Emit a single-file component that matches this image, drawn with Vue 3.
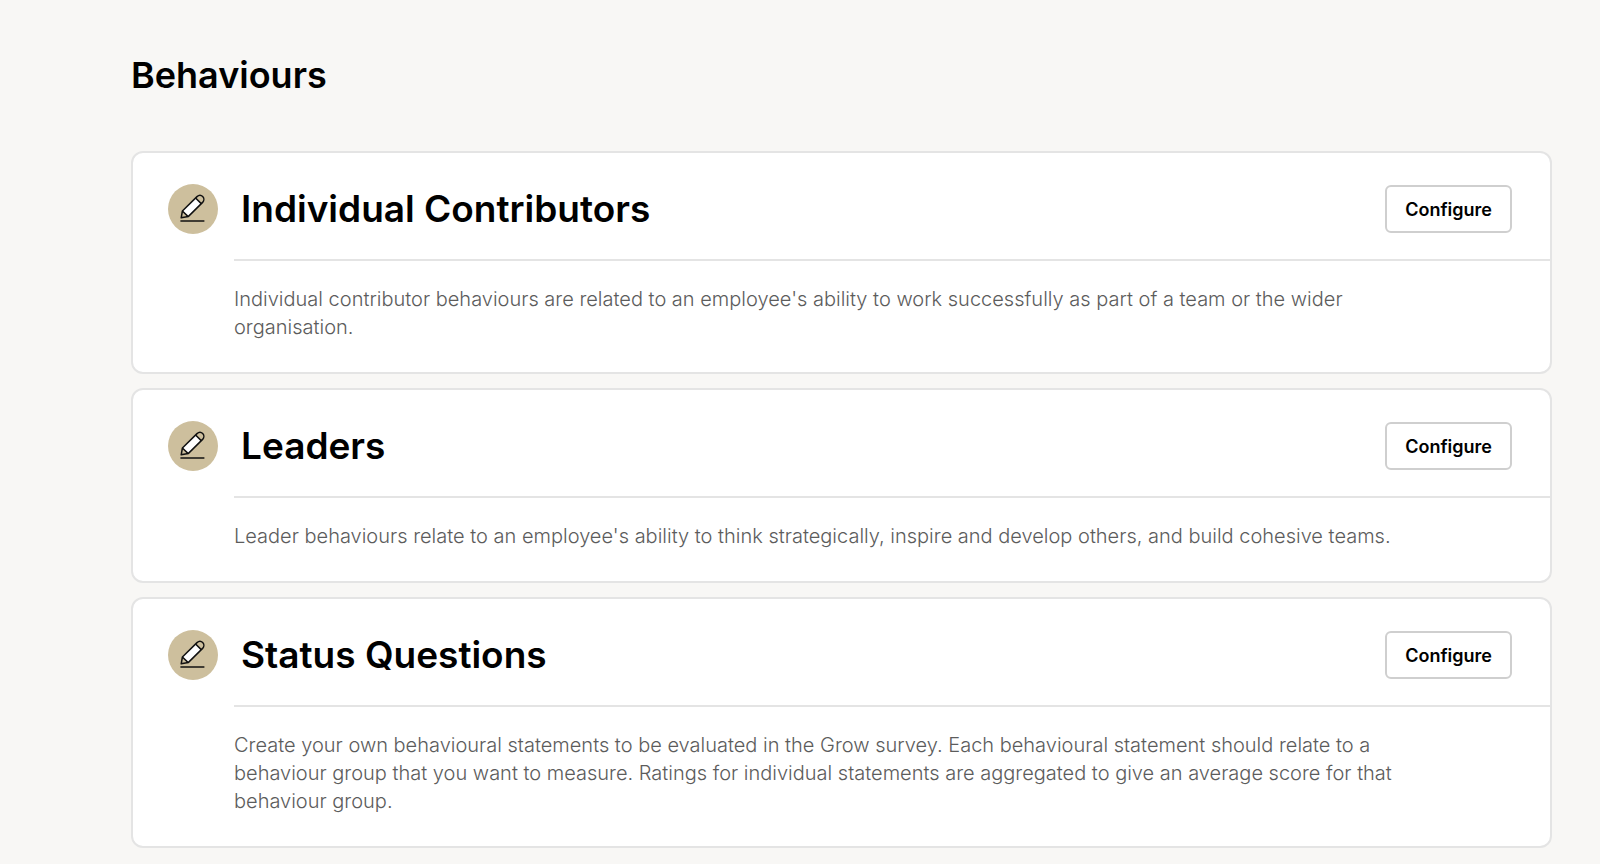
<script setup>
const groups = [
  {
    id: 'individual-contributors',
    title: 'Individual Contributors',
    description:
      "Individual contributor behaviours are related to an employee's ability to work successfully as part of a team or the wider organisation."
  },
  {
    id: 'leaders',
    title: 'Leaders',
    description:
      "Leader behaviours relate to an employee's ability to think strategically, inspire and develop others, and build cohesive teams."
  },
  {
    id: 'status-questions',
    title: 'Status Questions',
    description:
      'Create your own behavioural statements to be evaluated in the Grow survey. Each behavioural statement should relate to a behaviour group that you want to measure. Ratings for individual statements are aggregated to give an average score for that behaviour group.'
  }
]
</script>

<template>
  <main class="page">
    <h1 class="page-title">Behaviours</h1>
    <div class="cards">
      <section v-for="group in groups" :key="group.id" class="card" :aria-labelledby="group.id">
        <header class="card-header">
          <span class="badge">
            <svg class="pencil" viewBox="0 0 26 30" aria-hidden="true">
              <path class="barrel" d="M2.4 17 15.4 4 21.4 10 8.4 22.6Z" />
              <path
                class="outline"
                d="M1.2 23.8 2.4 17 17 2.6C18.8 .9 21.2 1 22.7 2.5 24.2 4 24.3 6.6 22.6 8.4L8.2 22.6Z"
              />
              <path class="outline" d="M2.4 17 8.2 22.6M15.6 4 21.2 9.6" />
              <path class="outline" d="M.4 27H24.4" />
            </svg>
          </span>
          <h2 :id="group.id" class="card-title">{{ group.title }}</h2>
          <button type="button" class="configure" :aria-describedby="group.id">Configure</button>
        </header>
        <div class="card-body">
          <p class="description">{{ group.description }}</p>
        </div>
      </section>
    </div>
  </main>
</template>

<style>
body {
  margin: 0;
  background: #f8f7f5;
}
</style>

<style scoped>
.page {
  padding: 51px 48px 16px 131px;
  font-family: Inter, "Open Sans", sans-serif;
  color: #000;
}

.page-title,
.card-title {
  margin: 0;
  font-size: 37px;
  line-height: 48px;
  font-weight: 600;
}

.page-title {
  font-size: 36px;
}

.cards {
  display: flex;
  flex-direction: column;
  gap: 14px;
  margin-top: 52px;
}

.card {
  border: 2px solid #e4e4e4;
  border-radius: 12px;
  background: #fff;
}

.card-header {
  display: flex;
  align-items: center;
  padding: 31px 38px 25px 35px;
}

.badge {
  display: flex;
  flex: none;
  align-items: center;
  justify-content: center;
  width: 50px;
  height: 50px;
  border-radius: 50%;
  background: #cdbf9d;
}

.pencil {
  width: 26px;
  height: 30px;
}

.barrel {
  fill: #fff;
}

.outline {
  fill: none;
  stroke: #111;
  stroke-width: 1.5;
  stroke-linejoin: round;
}

.card-title {
  flex: 1;
  margin-left: 23px;
}

.configure {
  height: 48px;
  padding: 0 18px;
  border: 2px solid #cfcfcf;
  border-radius: 6px;
  background: #fff;
  color: #000;
  font: inherit;
  font-size: 18px;
  font-weight: 600;
  cursor: pointer;
}

.card-body {
  margin-left: 101px;
  padding: 24px 0 31px;
  border-top: 2px solid #e4e4e4;
}

.description {
  width: 90%;
  margin: 0;
  color: #5c5c5c;
  font-size: 20px;
  font-weight: 300;
  line-height: 28px;
}
</style>
